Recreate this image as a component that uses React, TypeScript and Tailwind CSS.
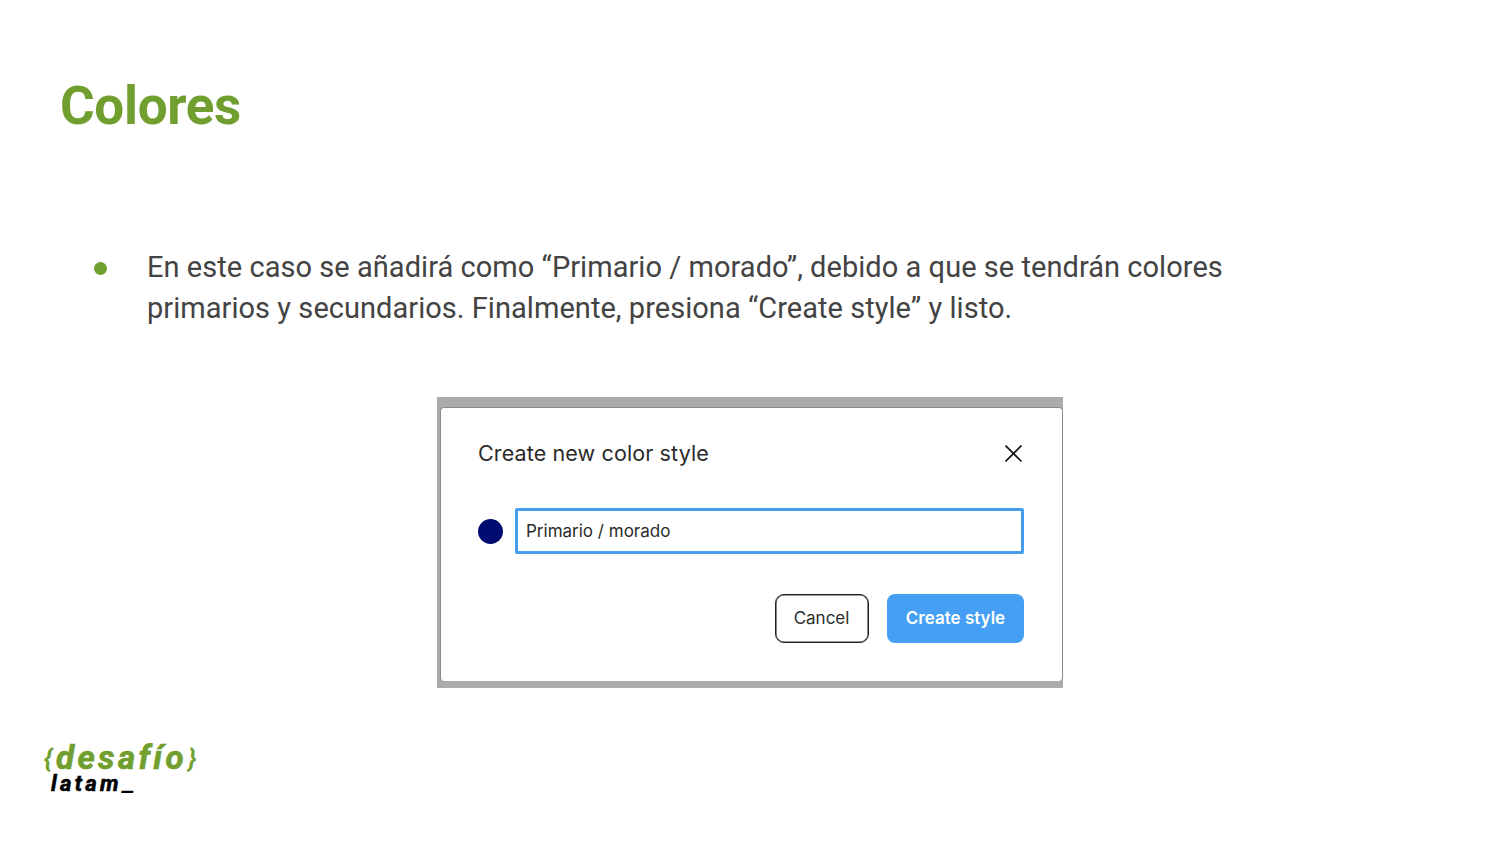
export default function App() {
  return (
    <main className="flex h-[844px] w-[1500px] flex-col overflow-hidden bg-white font-['Roboto',sans-serif]">
      <h1 className="ml-[60px] mt-[76px] h-[60px] text-[53px] font-bold leading-[60px] tracking-[-0.33px] text-[#719f2f]">Colores</h1>
      <ul className="ml-[94px] mt-[111px] text-[29px] leading-[41px] tracking-[0.042px] text-[#434343]">
        <li className="flex">
          <span className="mt-[15px] mr-[40px] size-[13px] rounded-full bg-[#719f2f]" />
          <p>
            <span className="block whitespace-nowrap">En este caso se añadirá como “Primario / morado”, debido a que se tendrán colores</span>
            <span className="block whitespace-nowrap">primarios y secundarios. Finalmente, presiona “Create style” y listo.</span>
          </p>
        </li>
      </ul>
      <section className="ml-[437px] mt-[68px] h-[291px] w-[626px] bg-[#ababab] pl-[3px] pt-[10px] font-['Inter',sans-serif] text-[#2b2b2b]">
        <div className="h-[274px] rounded-[4px] border border-b-0 border-[#8a8a8a] bg-white pl-[37px] pr-[38px] pt-[30px]">
          <div className="flex h-[32px] items-center justify-between">
            <h2 className="pb-[2px] text-[21.5px] tracking-[0.12px]">Create new color style</h2>
            <svg className="mr-px mb-px size-[18px]" viewBox="0 0 18 18" stroke="#111" strokeWidth="1.6"><path d="M.5.5 16.5 16.5M16.5.5.5 16.5" /></svg>
          </div>
          <div className="mt-[38px] flex items-center">
            <span className="mr-[12px] size-[25px] rounded-full bg-[#000b70]" />
            <div className="flex h-[46px] flex-1 items-center rounded-[2px] border-[3px] border-[#459eed] pl-[8px] pt-[2px] text-[17px]">Primario / morado</div>
          </div>
          <div className="mt-[40px] flex justify-end gap-[18px]">
            <button className="h-[49px] w-[94px] rounded-[9px] border border-[#222] pr-px pt-px text-[17px] shadow-[inset_0_0_0_0.6px_#333]">Cancel</button>
            <button className="h-[49px] w-[137px] rounded-[8px] bg-[#459ff5] pt-px text-[17px] font-semibold text-white">Create style</button>
          </div>
        </div>
      </section>
      <footer className="ml-[44px] mt-[53px] font-['Roboto',sans-serif] font-bold italic">
        <div className="flex h-[34px] items-center text-[33px] leading-[34px] text-[#719f2f]">
          <span className="w-[12px] text-[26px]">{"{"}</span>
          <span className="w-[132px] tracking-[3.4px] [-webkit-text-stroke:0.7px_#719f2f]">desafío</span>
          <span className="text-[26px]">{"}"}</span>
        </div>
        <div className="ml-[7px] flex h-[20px] text-[22px] leading-[18px] text-black">
          <span className="w-[72px] tracking-[3.3px] [-webkit-text-stroke:0.6px_black]">latam</span>
          <span className="origin-left scale-x-[1.25]">_</span>
        </div>
      </footer>
    </main>
  );
}
